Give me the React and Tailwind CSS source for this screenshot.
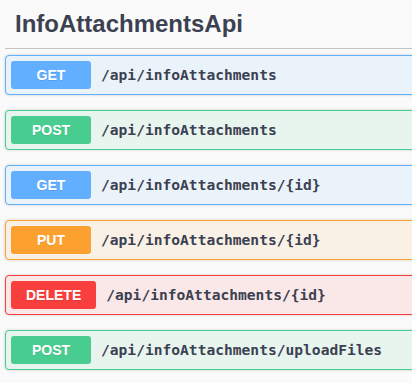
import React from 'react';

const styles = {
  GET: { box: 'border-[#61affe] bg-[#ebf3fa]', badge: 'bg-[#61affe]' },
  POST: { box: 'border-[#49cc90] bg-[#e8f5ef]', badge: 'bg-[#49cc90]' },
  PUT: { box: 'border-[#fca130] bg-[#faf1e6]', badge: 'bg-[#fca130]' },
  DELETE: { box: 'border-[#f93e3e] bg-[#fae7e7]', badge: 'bg-[#f93e3e]' },
};

const endpoints = [
  { method: 'GET', path: '/api/infoAttachments' },
  { method: 'POST', path: '/api/infoAttachments' },
  { method: 'GET', path: '/api/infoAttachments/{id}' },
  { method: 'PUT', path: '/api/infoAttachments/{id}' },
  { method: 'DELETE', path: '/api/infoAttachments/{id}' },
  { method: 'POST', path: '/api/infoAttachments/uploadFiles' },
];

function Opblock({ method, path }) {
  const s = styles[method];
  return (
    <div className={`mb-[15px] rounded-[4px] border shadow-[0_0_3px_rgba(0,0,0,0.19)] ${s.box}`}>
      <div className="flex items-center p-[5px]">
        <span
          className={`min-w-[80px] rounded-[3px] px-[15px] py-[6px] text-center text-[14px] leading-[16px] font-bold text-white [text-shadow:0_1px_0_rgba(0,0,0,0.1)] ${s.badge}`}
          style={{ fontFamily: '"Liberation Sans", Arial, sans-serif' }}
        >
          {method}
        </span>
        <span
          className="px-[10px] text-[14.6px] font-bold text-[#3b4151]"
          style={{ fontFamily: '"DejaVu Sans Mono", monospace' }}
        >
          {path}
        </span>
      </div>
    </div>
  );
}

export default function App() {
  return (
    <div className="h-[383px] w-[412px] overflow-hidden bg-[#fafafa]">
      <div className="ml-[5px] w-[430px]">
        <h3
          className="mb-[6px] border-b border-[#c1c3c7] px-[10px] pt-[10px] pb-[10px] text-[24px] leading-[28px] font-bold text-[#3b4151]"
          style={{ fontFamily: '"Liberation Sans", Arial, sans-serif' }}
        >
          InfoAttachmentsApi
        </h3>
        {endpoints.map((e, i) => (
          <Opblock key={i} method={e.method} path={e.path} />
        ))}
      </div>
    </div>
  );
}
